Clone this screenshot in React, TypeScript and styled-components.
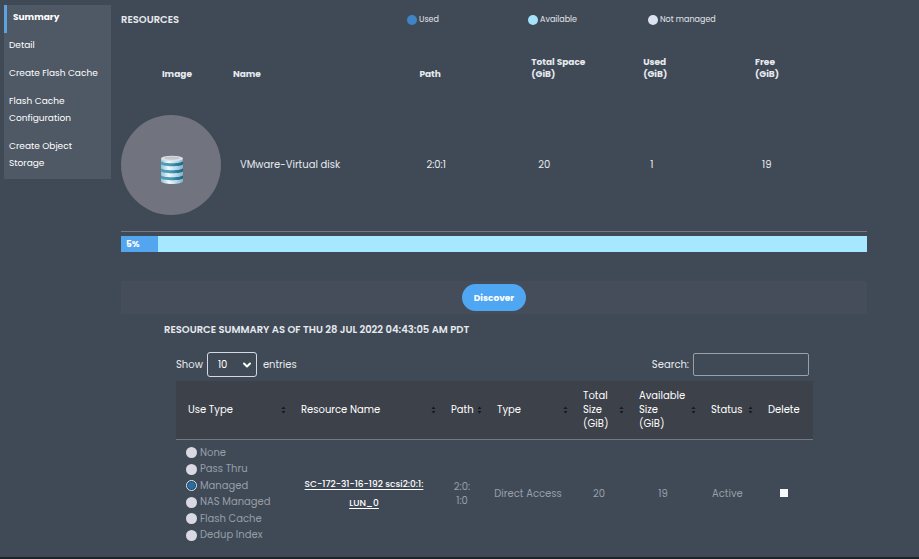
import React from "react";
import styled, { createGlobalStyle } from "styled-components";
import { ChevronDown } from "lucide-react";

const GlobalStyle = createGlobalStyle`
  * { box-sizing: border-box; }
  body {
    margin: 0;
    background: #404a56;
    color: #e6e9ee;
    font-family: Poppins, Inter, "Liberation Sans", sans-serif;
    font-size: 10px;
    line-height: 12px;
  }
  button, input, select { font: inherit; color: inherit; }
`;

const Page = styled.div`
  display: flex;
  flex-direction: column;
  min-height: 100vh;
  border-bottom: 2px solid #1d232b;
`;

const Columns = styled.div`
  display: flex;
  align-items: flex-start;
  gap: 10px;
  padding: 5px 52px 0 4px;
`;

const Sidebar = styled.nav`
  flex: 0 0 107px;
  background: #4f5865;
`;

const SideLink = styled.a<{ $active?: boolean }>`
  display: block;
  padding: 4px 8px 7px ${(p) => (p.$active ? "6px" : "5px")};
  border-left: ${(p) => (p.$active ? "3px solid #5ea3e0" : "0")};
  font-size: 9px;
  font-weight: ${(p) => (p.$active ? 700 : 400)};
  line-height: 17px;
  color: #fff;
  text-decoration: none;
`;

const Main = styled.main`
  flex: 1;
  min-width: 0;
`;

const TopRow = styled.div`
  display: grid;
  grid-template-columns: 286fr 121fr 120fr 219fr;
  align-items: center;
  height: 29px;
`;

const Title = styled.h2`
  margin: 0;
  font-size: 10px;
  font-weight: 600;
`;

const LegendItem = styled.span`
  display: flex;
  align-items: center;
  gap: 2px;
  font-size: 8px;
  color: #e2e5ea;
`;

const Dot = styled.i<{ $color: string }>`
  width: 10px;
  height: 10px;
  border-radius: 50%;
  background: ${(p) => p.$color};
`;

const DiskTable = styled.table`
  width: 100%;
  margin-top: 18px;
  border-collapse: collapse;
  table-layout: fixed;
  border-bottom: 1px solid #777882;
`;

const DiskHead = styled.th<{ $width: string; $center?: boolean }>`
  width: ${(p) => p.$width};
  padding: 4px 0 1px;
  vertical-align: bottom;
  text-align: ${(p) => (p.$center ? "center" : "left")};
  font-size: 9px;
  font-weight: 700;
`;

const DiskCell = styled.td<{ $flush?: boolean }>`
  padding: 34px 0 16px ${(p) => (p.$flush ? "0" : "7px")};
`;

const DiskBadge = styled.div`
  display: flex;
  align-items: center;
  justify-content: center;
  width: 100px;
  height: 100px;
  padding: 9px 0 0 2px;
  border-radius: 50%;
  background: #71747f;
`;

const UsageBar = styled.div`
  margin-top: 4px;
  height: 16px;
  background: #a5e8ff;
`;

const UsageFill = styled.div`
  height: 100%;
  padding-left: 5px;
  background: #54a5f0;
  color: #fff;
  font-size: 9px;
  font-weight: 700;
  line-height: 16px;
`;

const ActionBand = styled.div`
  display: flex;
  justify-content: center;
  margin-top: 29px;
  padding: 3px 0;
  background: #454c5a;
`;

const PillButton = styled.button`
  height: 27px;
  padding: 0 12px;
  border: 0;
  border-radius: 14px;
  background: #4fa6f2;
  color: #fff;
  font-size: 9px;
  font-weight: 700;
`;

const Summary = styled.section`
  padding: 10px 54px 0 43px;
`;

const SummaryBody = styled.div`
  margin: 16px 0 0 12px;
`;

const Toolbar = styled.div`
  display: flex;
  justify-content: space-between;
  align-items: center;
  padding-right: 4px;
  height: 25px;
`;

const Field = styled.label`
  display: flex;
  align-items: center;
  gap: 4px;
`;

const SelectBox = styled.span`
  display: grid;
  align-items: center;
  justify-items: end;
  width: 50px;
  margin-right: 2px;

  > * { grid-area: 1 / 1; }
  > svg { margin-right: 4px; pointer-events: none; }
`;

const Select = styled.select`
  appearance: none;
  width: 100%;
  height: 25px;
  padding: 0 10px;
  border: 1px solid #d5dae2;
  border-radius: 3px;
  background: transparent;
  color: #fff;
`;

const SearchInput = styled.input`
  width: 116px;
  height: 23px;
  padding: 0 6px;
  border: 1px solid #98a0ac;
  border-radius: 2px;
  background: transparent;
`;

const ResourceTable = styled.table`
  width: 100%;
  margin-top: 4px;
  border-collapse: collapse;
  table-layout: fixed;
`;

const HeadCell = styled.th<{ $width: number }>`
  width: ${(p) => p.$width}%;
  height: 58px;
  padding: 0 3px 0 12px;
  background: #3d4149;
  border-bottom: 1px solid #747a84;
  color: #fff;
  font-weight: 400;
  line-height: 14px;
  text-align: left;
`;

const HeadInner = styled.div`
  display: flex;
  align-items: center;
  justify-content: space-between;
`;

const BodyCell = styled.td<{ $left?: boolean }>`
  padding: 5px 0 4px ${(p) => (p.$left ? "10px" : "0")};
  text-align: ${(p) => (p.$left ? "left" : "center")};
  line-height: 14px;
  color: #979ea8;
`;

const ResourceLink = styled.a`
  color: #fff;
  font-size: 9px;
  font-weight: 500;
  line-height: 19px;
  text-underline-offset: 2px;
`;

const Options = styled.div`
  display: grid;
  grid-auto-rows: 1fr;
  height: 99px;
`;

const Option = styled.label`
  display: flex;
  align-items: center;
  gap: 3px;
`;

const Radio = styled.input`
  appearance: none;
  width: 11px;
  height: 11px;
  margin: 0;
  border-radius: 50%;
  background: #d8d9e2;

  &:checked {
    border: 1px solid #dcebf5;
    background: radial-gradient(circle, #2c6c9c 50%, #1d4468 60%);
  }
`;

const Check = styled.input`
  appearance: none;
  width: 8px;
  height: 8px;
  margin: 0;
  background: #f4f8f8;
`;

const DiskIcon = () => (
  <svg width="24" height="30" viewBox="0 0 24 30" aria-hidden="true">
    <defs>
      <linearGradient id="disk-side">
        <stop offset="0" stopColor="#8fc4d8" />
        <stop offset="0.35" stopColor="#f1f8fc" />
        <stop offset="0.7" stopColor="#b5d9ea" />
        <stop offset="1" stopColor="#7fb0c8" />
      </linearGradient>
      <linearGradient id="disk-groove">
        <stop offset="0" stopColor="#4f9bb8" />
        <stop offset="0.4" stopColor="#4a9cba" />
        <stop offset="1" stopColor="#1d6280" />
      </linearGradient>
    </defs>
    <path d="M1 3v23c0 4 22 4 22 0V3z" fill="url(#disk-side)" />
    {[6, 13, 20].map((y) => (
      <path key={y} d={`M1 ${y}c0 3 22 3 22 0v3c0 3-22 3-22 0z`} fill="url(#disk-groove)" />
    ))}
    <ellipse cx="12" cy="3.5" rx="11" ry="2.8" fill="#e0e2e5" />
    <ellipse cx="12" cy="3.2" rx="8" ry="1.6" fill="#c3c6ca" />
  </svg>
);

const SortIcon = () => (
  <svg width="5" height="8" viewBox="0 0 5 8" aria-hidden="true">
    <path d="M2.5 0.5L4.5 3h-4zM2.5 7.5L0.5 5h4z" fill="#16191e" />
  </svg>
);

const links = ["Summary", "Detail", "Create Flash Cache", "Flash Cache Configuration", "Create Object Storage"];

const legend = [
  { label: "Used", color: "#3f85c6" },
  { label: "Available", color: "#a5e3fa" },
  { label: "Not managed", color: "#dde3ee" },
];

const headers: { label: React.ReactNode; width: number; sortable: boolean }[] = [
  { label: "Use Type", width: 17.74, sortable: true },
  { label: "Resource Name", width: 23.55, sortable: true },
  { label: "Path", width: 7.22, sortable: true },
  { label: "Type", width: 13.5, sortable: true },
  { label: <>Total<br />Size<br />(GiB)</>, width: 8.79, sortable: true },
  { label: <>Available<br />Size<br />(GiB)</>, width: 11.3, sortable: true },
  { label: "Status", width: 8.95, sortable: true },
  { label: "Delete", width: 8.95, sortable: false },
];

const useTypes = ["None", "Pass Thru", "Managed", "NAS Managed", "Flash Cache", "Dedup Index"];

export default function App() {
  const usedPercent = 5;
  return (
    <Page>
      <GlobalStyle />
      <Columns>
        <Sidebar aria-label="Storage">
          {links.map((label, i) => (
            <SideLink key={label} href="#" $active={i === 0}>{label}</SideLink>
          ))}
        </Sidebar>
        <Main>
          <TopRow>
            <Title>RESOURCES</Title>
            {legend.map((item) => (
              <LegendItem key={item.label}><Dot $color={item.color} />{item.label}</LegendItem>
            ))}
          </TopRow>
          <DiskTable>
            <thead>
              <tr>
                <DiskHead $width="15%" $center>Image</DiskHead>
                <DiskHead $width="25%">Name</DiskHead>
                <DiskHead $width="15%">Path</DiskHead>
                <DiskHead $width="15%">Total Space<br />(GiB)</DiskHead>
                <DiskHead $width="15%">Used<br />(GiB)</DiskHead>
                <DiskHead $width="15%">Free<br />(GiB)</DiskHead>
              </tr>
            </thead>
            <tbody>
              <tr>
                <DiskCell $flush><DiskBadge><DiskIcon /></DiskBadge></DiskCell>
                <DiskCell>VMware-Virtual disk</DiskCell>
                <DiskCell>2:0:1</DiskCell>
                <DiskCell>20</DiskCell>
                <DiskCell>1</DiskCell>
                <DiskCell>19</DiskCell>
              </tr>
            </tbody>
          </DiskTable>
          <UsageBar>
            <UsageFill style={{ width: `${usedPercent}%` }}>{usedPercent}%</UsageFill>
          </UsageBar>
          <ActionBand>
            <PillButton type="button">Discover</PillButton>
          </ActionBand>
          <Summary>
            <Title>RESOURCE SUMMARY AS OF THU 28 JUL 2022 04:43:05 AM PDT</Title>
            <SummaryBody>
              <Toolbar>
                <Field>
                  Show
                  <SelectBox>
                    <Select defaultValue="10">
                      <option>10</option>
                      <option>25</option>
                      <option>50</option>
                    </Select>
                    <ChevronDown size={12} strokeWidth={4} color="#fff" />
                  </SelectBox>
                  entries
                </Field>
                <Field>
                  Search:
                  <SearchInput type="search" />
                </Field>
              </Toolbar>
              <ResourceTable>
                <thead>
                  <tr>
                    {headers.map((h, i) => (
                      <HeadCell key={i} $width={h.width}>
                        <HeadInner>
                          <span>{h.label}</span>
                          {h.sortable && <SortIcon />}
                        </HeadInner>
                      </HeadCell>
                    ))}
                  </tr>
                </thead>
                <tbody>
                  <tr>
                    <BodyCell $left>
                      <Options role="radiogroup" aria-label="Use Type">
                        {useTypes.map((type) => (
                          <Option key={type}>
                            <Radio type="radio" name="use-type" defaultChecked={type === "Managed"} />
                            {type}
                          </Option>
                        ))}
                      </Options>
                    </BodyCell>
                    <BodyCell>
                      <ResourceLink href="#">SC-172-31-16-192 scsi2:0:1:<br />LUN_0</ResourceLink>
                    </BodyCell>
                    <BodyCell>2:0:<br />1:0</BodyCell>
                    <BodyCell>Direct Access</BodyCell>
                    <BodyCell>20</BodyCell>
                    <BodyCell>19</BodyCell>
                    <BodyCell>Active</BodyCell>
                    <BodyCell><Check type="checkbox" aria-label="Delete" /></BodyCell>
                  </tr>
                </tbody>
              </ResourceTable>
            </SummaryBody>
          </Summary>
        </Main>
      </Columns>
    </Page>
  );
}
